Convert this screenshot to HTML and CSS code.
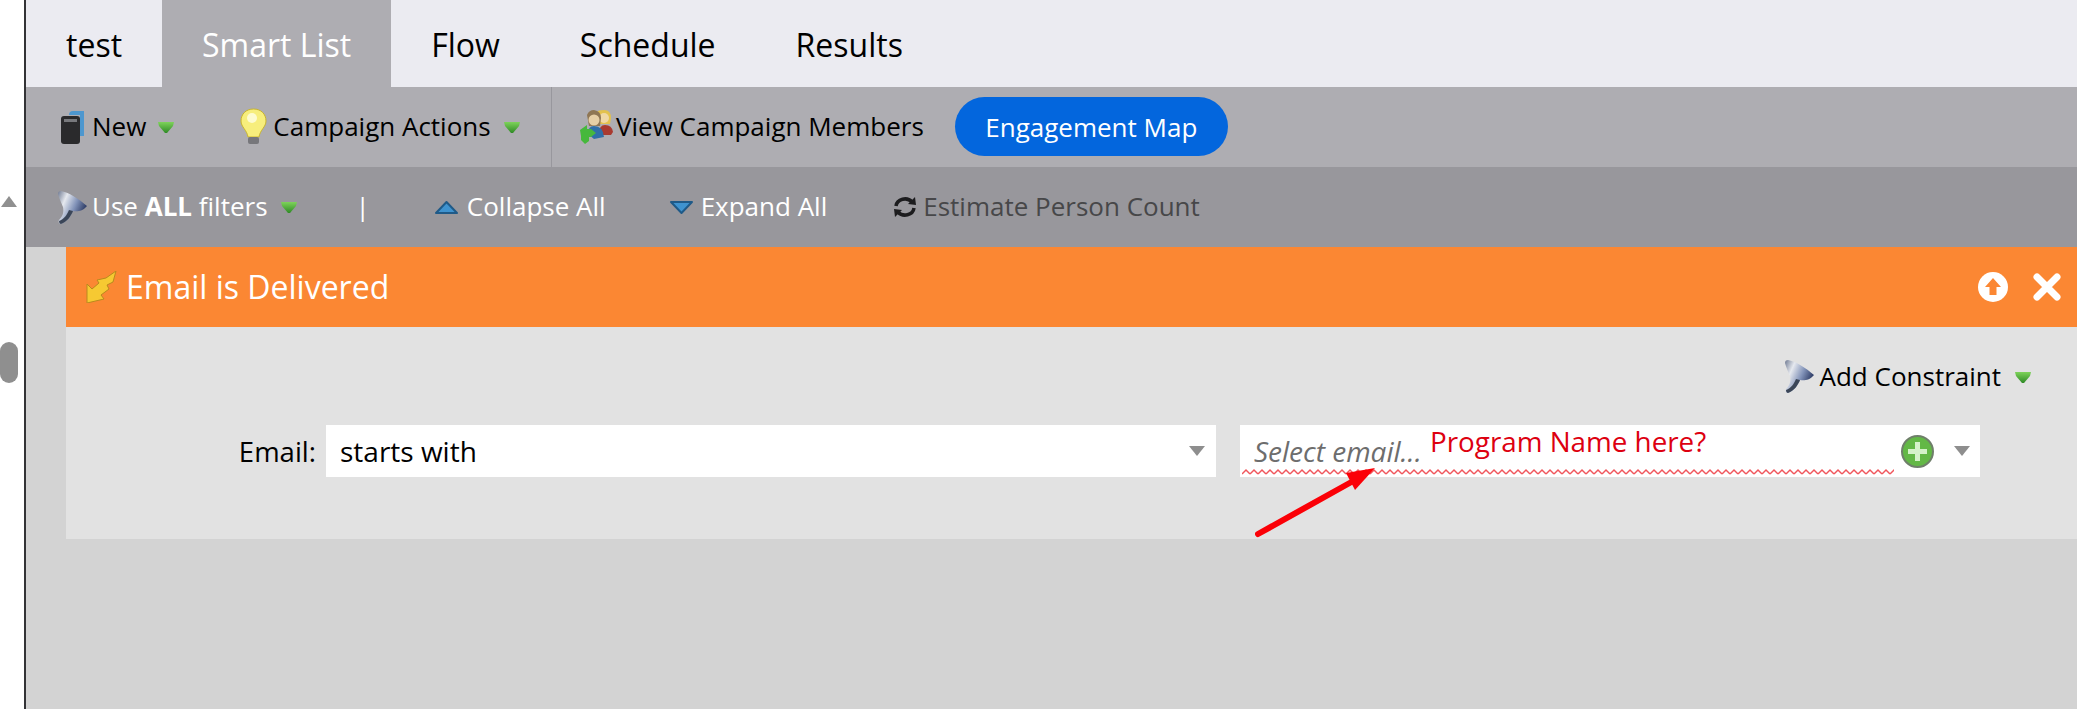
FILE: index.html
```html
<!DOCTYPE html>
<html lang="en">
<head>
    <meta charset="UTF-8">
    <title>Smart List</title>
    <link rel="stylesheet" href="styles.css">
</head>
<body>

    <!-- shared icons -->
    <svg class="defs" width="0" height="0">
        <defs>
            <linearGradient id="funnelFill" x1="0" y1="0" x2="1" y2="0.5">
                <stop offset="0" stop-color="#6f7a92"/>
                <stop offset="0.3" stop-color="#e6e9ef"/>
                <stop offset="0.65" stop-color="#8192b8"/>
                <stop offset="1" stop-color="#26345e"/>
            </linearGradient>
            <linearGradient id="dropFill" x1="0" y1="0" x2="0" y2="1">
                <stop offset="0" stop-color="#7ed35a"/>
                <stop offset="1" stop-color="#2f8a26"/>
            </linearGradient>
            <symbol id="funnel" viewBox="0 0 29 33">
                <path d="M3 0 C10 1 21 8 29 15 C25 20 19 21 15 20 C13 25 9 31 3 33 C1 33 0 31 1 29 C5 25 6 21 5 16 C3 11 1 7 0 3 C0 1 1 0 3 0 Z" fill="url(#funnelFill)"/>
                <path d="M3 33 C9 31 13 25 15 20 L11 19 C9 24 6 28 1 30 C1 32 2 33 3 33 Z" fill="#3b4658"/>
            </symbol>
            <symbol id="drop" viewBox="0 0 16 12">
                <path d="M0 1 H16 L15 5 L9 12 H7 L1 5 Z" fill="url(#dropFill)"/>
            </symbol>
        </defs>
    </svg>

    <div class="page">
        <div class="scroller">
            <span class="scrollUp"></span>
            <span class="scrollThumb"></span>
        </div>

        <div class="main">
            <nav class="tabs">
                <a class="tab">test</a>
                <a class="tab active">Smart List</a>
                <a class="tab">Flow</a>
                <a class="tab">Schedule</a>
                <a class="tab">Results</a>
            </nav>

            <div class="toolbar barOne">
                <div class="barGroup groupNew">
                    <svg class="ico icoNew" viewBox="0 0 24 34">
                        <path d="M8 5 Q8 1 12 1 H23 V26 H19 V5 Z" fill="#4d97cf"/>
                        <rect x="0" y="6" width="19" height="28" rx="3" fill="#2a2a2c"/>
                        <rect x="3" y="9" width="13" height="3" fill="#77787c"/>
                    </svg>
                    <span class="lbl lblNew">New</span>
                    <svg class="drop dropNew"><use href="#drop"/></svg>
                    <svg class="ico icoBulb" viewBox="0 0 27 38">
                        <path d="M13.500 1 C21 1 26 6 26 13 C26 19 20 22 19 29 H8 C7 22 1 19 1 13 C1 6 6 1 13.500 1 Z" fill="#f7ee7c" stroke="#c9b52d"/>
                        <circle cx="12" cy="10" r="5" fill="#fdfbd0"/>
                        <rect x="8" y="29" width="11" height="7" rx="2" fill="#77777b"/>
                    </svg>
                    <span class="lbl lblActions">Campaign Actions</span>
                    <svg class="drop dropActions"><use href="#drop"/></svg>
                </div>
                <div class="barGroup groupView">
                    <svg class="ico icoPeople" viewBox="0 0 33 34">
                        <path d="M17 2 Q18 0 24 0 Q31 0 31 8 L30 14 H19 Z" fill="#e3c24e"/>
                        <circle cx="24" cy="8" r="5" fill="#f0d9a6"/>
                        <path d="M19 24 Q19 15 25 15 Q32 15 33 22 L31 25 H21 Z" fill="#a93a30"/>
                        <path d="M7 5 Q9 0 14 0 Q21 1 21 8 L20 16 H9 Z" fill="#8f7654"/>
                        <circle cx="14" cy="10" r="5.500" fill="#e7cfa6"/>
                        <path d="M8 24 Q8 16 14 16 Q23 16 24 27 L14 29 Z" fill="#2f6fa8"/>
                        <path d="M0 20 L7 15 V19 H11 L16 23 L11 27 H9 V31 L5 34 L1 30 V26 Z" fill="#46b83c"/>
                    </svg>
                    <span class="lbl lblView">View Campaign Members</span>
                    <button class="mapBtn">Engagement Map</button>
                </div>
            </div>

            <div class="toolbar barTwo">
                <svg class="ico icoFunnel"><use href="#funnel"/></svg>
                <span class="lbl light lblUse">Use <b>ALL</b> filters</span>
                <svg class="drop dropUse"><use href="#drop"/></svg>
                <span class="lbl light pipe">|</span>
                <svg class="ico icoTri" viewBox="0 0 25 15">
                    <path d="M12.500 2 L23 13 H2 Z" fill="#3f93cf" stroke="#1f5a88" stroke-width="2" stroke-linejoin="round"/>
                </svg>
                <span class="lbl light lblCollapse">Collapse All</span>
                <svg class="ico icoTri icoExpand" viewBox="0 0 25 15">
                    <path d="M2 2 H23 L12.500 13 Z" fill="#3f93cf" stroke="#1f5a88" stroke-width="2" stroke-linejoin="round"/>
                </svg>
                <span class="lbl light lblExpand">Expand All</span>
                <svg class="ico icoRefresh" viewBox="0 0 24 24">
                    <path d="M3 11 A9 8 0 0 1 19 7" fill="none" stroke="#1c1c1e" stroke-width="3.500"/>
                    <path d="M15 9 L23 10 L22 2 Z" fill="#1c1c1e"/>
                    <path d="M21 13 A9 8 0 0 1 5 17" fill="none" stroke="#1c1c1e" stroke-width="3.500"/>
                    <path d="M9 15 L1 14 L2 22 Z" fill="#1c1c1e"/>
                </svg>
                <span class="lbl muted">Estimate Person Count</span>
            </div>

            <div class="content">
                <section class="filter">
                    <header class="filterHead">
                        <svg class="ico icoBolt" viewBox="0 0 31 32">
                            <path d="M30 0 L27 11 L21 14 L23 18 L15 24 L18 28 L1 32 L1 13 L6 18 L13 12 L11 9 L20 7 Z" fill="#f6c932" stroke="#b98a1e"/>
                        </svg>
                        <h2 class="filterTitle">Email is Delivered</h2>
                        <svg class="ico icoUp" viewBox="0 0 30 30">
                            <circle cx="15" cy="15" r="15" fill="#fff"/>
                            <path d="M15 6 L23 15 H18.500 V23 H11.500 V15 H7 Z" fill="#fb8733"/>
                        </svg>
                        <svg class="ico icoClose" viewBox="0 0 30 30">
                            <path d="M5 5 L25 25 M25 5 L5 25" stroke="#fff" stroke-width="7" stroke-linecap="round"/>
                        </svg>
                    </header>

                    <div class="filterBody">
                        <div class="constraintRow">
                            <svg class="ico icoFunnel"><use href="#funnel"/></svg>
                            <span class="lbl lblAdd">Add Constraint</span>
                            <svg class="drop dropAdd"><use href="#drop"/></svg>
                        </div>
                        <div class="fieldRow">
                            <label class="fieldLabel">Email:</label>
                            <div class="selectBox selectOp">
                                <span class="selectText">starts with</span>
                                <span class="caret"></span>
                            </div>
                            <div class="selectBox selectEmail">
                                <span class="selectHint">Select email...</span>
                                <svg class="ico icoPlus" viewBox="0 0 33 33">
                                    <circle cx="16.500" cy="16.500" r="15.500" fill="#63b846" stroke="#6f7f6a" stroke-width="2"/>
                                    <path d="M16.500 7 V26 M7 16.500 H26" stroke="#d5f2c9" stroke-width="5"/>
                                </svg>
                                <span class="caret"></span>
                                <svg class="squiggle" width="652" height="8">
                                    <defs>
                                        <pattern id="wave" width="8" height="8" patternUnits="userSpaceOnUse">
                                            <path d="M0 6 L4 2 L8 6" fill="none" stroke="#f0565c" stroke-width="1.500"/>
                                        </pattern>
                                    </defs>
                                    <rect width="652" height="8" fill="url(#wave)"/>
                                </svg>
                                <span class="note">Program Name here?</span>
                            </div>
                        </div>
                        <svg class="pointer" width="130" height="80" viewBox="0 0 130 80">
                            <path d="M3 72 L100 18" stroke="#fb0007" stroke-width="6" stroke-linecap="round"/>
                            <path d="M120 6 L100 28 L91 11 Z" fill="#fb0007"/>
                        </svg>
                    </div>
                </section>
            </div>
        </div>
    </div>

</body>
</html>
```

FILE: styles.css
```css
* {
    box-sizing: border-box;
}

html, body {
    margin: 0;
    height: 100%;
    overflow: hidden;
}

body {
    background-color: #fff;
    font-family: "Open Sans", sans-serif;
    color: #000;
}

.defs {
    position: absolute;
}

.page {
    display: flex;
    height: 709px;
}

/* scroll strip on the far left */
.scroller {
    width: 26px;
    flex: none;
    border-right: 2px solid #333336;
    padding-top: 196px;
}

.scrollUp {
    display: block;
    width: 0;
    margin-left: 1px;
    border-left: 8px solid transparent;
    border-right: 8px solid transparent;
    border-bottom: 11px solid #909090;
}

.scrollThumb {
    display: block;
    width: 18px;
    height: 41px;
    margin-top: 135px;
    border-radius: 9px;
    background-color: #8f8f8f;
}

.main {
    flex: 1;
    min-width: 0;
    display: flex;
    flex-direction: column;
}

/* tabs */
.tabs {
    display: flex;
    height: 87px;
    background-color: #ebebf1;
}

.tab {
    display: flex;
    align-items: center;
    padding: 2px 40px 0;
    font-size: 32px;
}

.tab.active {
    background-color: #aeadb2;
    color: #fff;
}

/* toolbars */
.toolbar {
    display: flex;
    align-items: center;
}

.barOne {
    height: 80px;
    background-color: #aeadb2;
}

.barTwo {
    height: 80px;
    background-color: #98979c;
    padding-left: 32px;
}

.barGroup {
    display: flex;
    align-items: center;
    height: 100%;
}

.groupNew {
    width: 526px;
    padding-left: 35px;
    border-right: 1px solid #98979d;
}

.groupView {
    padding-left: 28px;
}

.lbl {
    padding-bottom: 2px;
    font-size: 26px;
    white-space: nowrap;
}

.light {
    color: #fff;
}

.muted {
    color: #474749;
}

.ico {
    flex: none;
    display: block;
}

.drop {
    flex: none;
    display: block;
    width: 16px;
    height: 12px;
}

.icoNew {
    width: 24px;
    height: 34px;
}

.lblNew {
    margin-left: 7px;
}

.dropNew {
    margin-left: 12px;
}

.icoBulb {
    width: 27px;
    height: 38px;
    margin-left: 66px;
}

.lblActions {
    margin-left: 6px;
}

.dropActions {
    margin-left: 13px;
}

.icoPeople {
    width: 33px;
    height: 34px;
}

.lblView {
    margin-left: 3px;
}

.mapBtn {
    height: 59px;
    width: 273px;
    margin: 0 0 1px 31px;
    border: none;
    border-radius: 30px;
    background-color: #0366dd;
    color: #fff;
    font-family: inherit;
    font-size: 26px;
}

.icoFunnel {
    width: 29px;
    height: 33px;
}

.lblUse {
    margin-left: 5px;
}

.dropUse {
    margin-left: 13px;
}

.pipe {
    margin-left: 59px;
}

.icoTri {
    width: 25px;
    height: 15px;
    margin-left: 64px;
}

.lblCollapse {
    margin-left: 8px;
}

.icoExpand {
    margin-left: 63px;
}

.lblExpand {
    margin-left: 7px;
}

.icoRefresh {
    width: 24px;
    height: 24px;
    margin-left: 66px;
    margin-right: 6px;
}

/* filter card */
.content {
    flex: 1;
    background-color: #d3d3d3;
    padding-left: 40px;
}

.filterHead {
    display: flex;
    align-items: center;
    height: 80px;
    padding: 0 15px 0 20px;
    background-color: #fb8733;
}

.icoBolt {
    width: 31px;
    height: 32px;
}

.filterTitle {
    flex: 1;
    margin: 0 0 2px 9px;
    font-size: 32px;
    font-weight: 400;
    color: #fff;
}

.icoUp {
    width: 30px;
    height: 30px;
}

.icoClose {
    width: 30px;
    height: 30px;
    margin-left: 24px;
}

.filterBody {
    position: relative;
    height: 212px;
    padding-top: 33px;
    background-color: #e2e2e2;
}

.constraintRow {
    display: flex;
    align-items: center;
    justify-content: flex-end;
    height: 33px;
    padding-right: 46px;
}

.lblAdd {
    margin-left: 6px;
}

.dropAdd {
    margin-left: 14px;
}

.fieldRow {
    display: flex;
    align-items: center;
    margin-top: 32px;
}

.fieldLabel {
    width: 260px;
    padding-right: 10px;
    text-align: right;
    font-size: 27.500px;
}

.selectBox {
    display: flex;
    align-items: center;
    height: 52px;
    background-color: #fff;
}

.selectOp {
    width: 890px;
    padding: 0 11px 0 14px;
}

.selectText {
    flex: 1;
    font-size: 28px;
}

.caret {
    width: 0;
    flex: none;
    border-left: 8px solid transparent;
    border-right: 8px solid transparent;
    border-top: 10px solid #8e8e8e;
}

.selectEmail {
    position: relative;
    width: 740px;
    margin-left: 24px;
    padding: 0 10px 0 14px;
}

.selectHint {
    flex: 1;
    font-size: 28px;
    font-style: italic;
    color: #6d6d6d;
}

.icoPlus {
    width: 33px;
    height: 33px;
    margin-right: 20px;
}

.squiggle {
    position: absolute;
    left: 2px;
    bottom: 1px;
}

/* annotation pasted over the screenshot */
.note {
    position: absolute;
    left: 190px;
    top: -3px;
    font-size: 27.800px;
    color: #dd0010;
    white-space: nowrap;
}

.pointer {
    position: absolute;
    left: 1189px;
    top: 135px;
}
```
